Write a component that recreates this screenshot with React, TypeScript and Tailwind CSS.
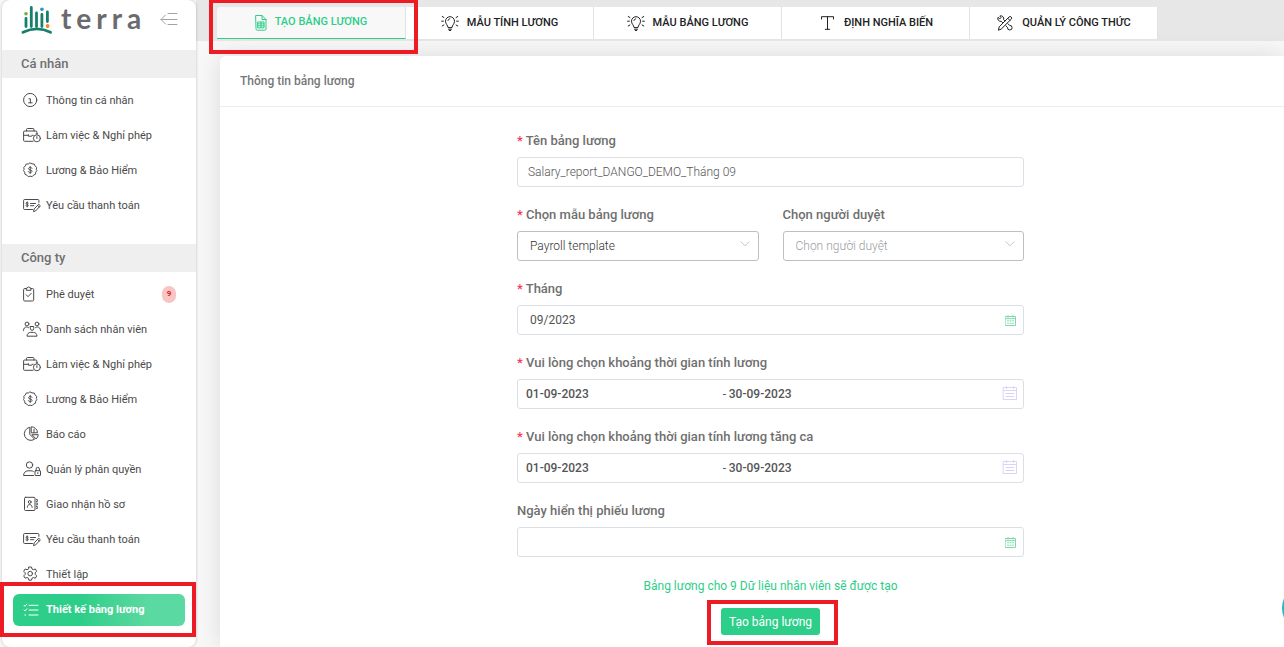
import type { ReactNode } from "react";

function Svg({ w, h, className = "", sw = 1, children }: { w: number; h: number; className?: string; sw?: number; children: ReactNode }) {
  return (
    <svg
      width={w}
      height={h}
      viewBox={`0 0 ${w} ${h}`}
      fill="none"
      stroke="currentColor"
      strokeWidth={sw}
      strokeLinecap="round"
      strokeLinejoin="round"
      className={className}
      aria-hidden="true"
    >
      {children}
    </svg>
  );
}

const InfoIcon = () => (
  <Svg w={18} h={16}>
    <circle cx="7.2" cy="8" r="6.6" />
    <path d="M6 6.8h1.4v4M5.6 10.8h3.6" />
  </Svg>
);

const WorkIcon = () => (
  <Svg w={18} h={16}>
    <path d="M3.5 4V2.6A1.1 1.1 0 0 1 4.6 1.5h5.3A1.1 1.1 0 0 1 11 2.6V4" />
    <path d="M10 14.3H1.6a1 1 0 0 1-1-1V5a1 1 0 0 1 1-1h11.3a1 1 0 0 1 1 1v1.5" />
    <path d="M.6 8.3H5M9 8.3h1.2M5.3 7.6v1.6h3.2" />
    <circle cx="13.9" cy="11.3" r="3.5" />
    <path d="M13.9 9.6v1.9M13.2 6.9h1.5" />
  </Svg>
);

const SalaryIcon = () => (
  <Svg w={18} h={16}>
    <path d="M7.2 1l1.9.9 2.1.1.9 1.9 1.5 1.5-.3 2.1.6 1.1-1.2 1.6-.2 2-1.9.9-1.4 1.5-2-.4-2 .4-1.4-1.5-1.9-.9-.2-2L.5 8.6l.6-1.1-.3-2.1 1.5-1.5L3.2 2l2.1-.1z" />
    <path d="M9 6.3C8.7 5.7 8 5.4 7.2 5.4c-1 0-1.7.5-1.7 1.2 0 1.8 3.5.9 3.5 2.7 0 .8-.8 1.3-1.8 1.3-.9 0-1.6-.4-1.9-1M7.2 4.5v7" />
  </Svg>
);

const PaymentIcon = () => (
  <Svg w={18} h={16}>
    <path d="M9.5 12.500H1.600a1 1 0 0 1-1-1v-8a1 1 0 0 1 1-1h13.300a1 1 0 0 1 1 1v1.800" />
    <path d="M5.200 6C4.300 5.200 3 5.500 3 6.300 3 7.500 5.300 7 5.300 8.400 5.300 9.300 3.700 9.500 2.900 8.700M4.200 4.900v5" />
    <path d="M7.500 6.500h5M7.500 8.700h3.300" />
    <path d="M10.600 14.300l.6-2.400 4.500-4.700 1.700 1.600-4.500 4.800zM14.500 8.400l1.700 1.600" />
  </Svg>
);

const ApproveIcon = () => (
  <Svg w={18} h={16}>
    <path d="M3.300 2.500H1.800A1.200 1.200 0 0 0 .6 3.700v10.100A1.200 1.200 0 0 0 1.800 15h7.700a1.200 1.200 0 0 0 1.200-1.200V3.700a1.200 1.200 0 0 0-1.200-1.200H8" />
    <path d="M3.300 3.900V2.200l1-.2a1.400 1.400 0 0 1 2.700 0l1 .2v1.700z" />
    <path d="M3.200 8.800l1.800 1.900 3.300-3.500" />
  </Svg>
);

const StaffIcon = () => (
  <Svg w={18} h={16}>
    <circle cx="4" cy="3" r="1.900" />
    <circle cx="14" cy="3" r="1.900" />
    <path d="M.5 9.500C.5 7.400 1.700 6 3.600 6c.8 0 1.400.2 1.900.6M17.500 9.500c0-2.100-1.200-3.500-3.100-3.500-.8 0-1.400.2-1.900.6" />
    <path d="M7.300 5.500h3.400v2a1.700 1.900 0 0 1-3.400 0z" />
    <path d="M4 14.800c0-2 1.600-3.400 3.600-3.400h2.800c2 0 3.600 1.400 3.600 3.400z" />
  </Svg>
);

const ReportIcon = () => (
  <Svg w={18} h={16}>
    <path d="M6.500 1.300A6.600 6.600 0 1 0 11.600 13.200L7 8.500z" />
    <path d="M8.600.8a6 6 0 0 1 5.900 6H8.600zM11 3.300v3.400" />
    <path d="M9.300 8.700h6a6 6 0 0 1-1.900 4z" />
  </Svg>
);

const RoleIcon = () => (
  <Svg w={18} h={16}>
    <circle cx="6.500" cy="4" r="3.200" />
    <path d="M10.500 14.500H.6C.6 11.700 2.500 9.800 5 9.800h3c.9 0 1.700.2 2.300.6" />
    <rect x="12" y="9.700" width="5.500" height="4.800" rx=".4" />
    <path d="M13.100 9.700V8a1.600 1.600 0 0 1 3.300 0v1.700M14.800 11.600v1" />
  </Svg>
);

const RecordsIcon = () => (
  <Svg w={18} h={16}>
    <rect x="1.500" y="1.300" width="10.500" height="13.200" rx="1" />
    <path d="M13.500 3.500h.8v2h-.8M13.500 7h.8v2h-.8M13.500 10.500h.8v2h-.8" />
    <circle cx="6.700" cy="6" r="1.400" />
    <path d="M4.300 11.300c0-1.700.9-2.700 2.400-2.700s2.400 1 2.400 2.700" />
  </Svg>
);

const GearIcon = () => (
  <Svg w={18} h={16}>
    <path d="M5.900 1h2.600l.5 2 1.300.7 2-.7 1.400 2.300-1.500 1.500v1.600l1.500 1.500-1.400 2.300-2-.7-1.300.7-.5 2H5.900l-.5-2-1.300-.7-2 .7L.7 9.900l1.500-1.500V6.800L.7 5.300 2.100 3l2 .7L5.400 3z" />
    <circle cx="7.200" cy="7.600" r="2.300" />
  </Svg>
);

const ChecklistIcon = () => (
  <Svg w={18} h={16}>
    <path d="M1 3.300l1 1 1.900-2.300M1 8l1 1 1.900-2.300M1.800 13h.9M6 3.300h9M6 8h9M6 13h9" />
  </Svg>
);

const SheetIcon = () => (
  <Svg w={18} h={18}>
    <path d="M4 1.500h6l4 4V15a1.200 1.200 0 0 1-1.200 1.200H5.200A1.200 1.200 0 0 1 4 15z" />
    <path d="M10 1.500v4h4M6 8h6v5.800H6zM6 9.900h6M6 11.800h6M9 8v5.800" />
  </Svg>
);

const BulbIcon = () => (
  <Svg w={18} h={18}>
    <path d="M7 13.200c0-2-2.500-3-2.500-6a4.500 4.500 0 0 1 9 0c0 3-2.500 4-2.500 6zM7.500 15.200h3M8.300 16.500h1.400M7 6.500c.2-.9.800-1.500 1.700-1.700" />
    <path d="M.6 7.200h1.800M15.600 7.200h1.800M1.200 2.500l1.700 1M16.800 2.500l-1.700 1M1.200 12l1.700-1M16.800 12l-1.700-1" />
  </Svg>
);

const TextIcon = () => (
  <Svg w={18} h={18}>
    <path d="M3.500 5V2.700h12V5M9.500 2.700v12.600M7.300 15.300h4.400" />
  </Svg>
);

const ToolsIcon = () => (
  <Svg w={18} h={18}>
    <path d="M2.500 15.800l.7-3L13 3a1.500 1.500 0 0 1 2.200 2.200l-9.800 9.700zM11.800 4.300l2.100 2.100" />
    <path d="M6.600 8.700L5.300 7.300a2.900 2.900 0 0 1-3.300-4l1.800 1.600 1.300-1.300L3.800 2a2.900 2.900 0 0 1 3.800 3.700l1.200 1.200" />
    <path d="M9.800 11.700l1.700 1.700a2.300 2.300 0 1 0 2-2l-1.600-1.700" />
  </Svg>
);

const CalendarIcon = () => (
  <Svg w={11} h={11} className="text-[#7fd9a9]">
    <path d="M.5 1.500h10v9H.5zM.5 3.700h10M3 .5v1.800M8 .5v1.800" />
    <path d="M2.500 5.800h1M5 5.800h1M7.500 5.800h1M2.500 8.200h1M5 8.200h1M7.500 8.200h1" />
  </Svg>
);

const RangeCalendarIcon = () => (
  <Svg w={16} h={16} className="text-[#dcd2fa]">
    <path d="M1.500 1.500h13v12h-13zM1.500 4.500h13M4.500 .5v2M11.500 .5v2M4 7.500h8M4 10.500h8" />
  </Svg>
);

const Chevron = () => (
  <Svg w={10} h={6} className="pointer-events-none absolute right-[9px] top-[10px] text-[#c0c4cc]">
    <path d="M1 .8l4 4 4-4" />
  </Svg>
);

const Logo = () => (
  <svg width="32" height="30" viewBox="0 0 32 30" fill="none" strokeLinecap="round" aria-hidden="true">
    <g stroke="#17806d" strokeWidth="2.800">
      <path d="M5 13.500v8M10.300 2.500v19M15.500 8v13.500M20.900 9.500v12M26.400 7v9.500" />
    </g>
    <path d="M2 27.300Q16 20.500 29.500 27.300" stroke="#17806d" strokeWidth="2.900" />
    <circle cx="5" cy="8.800" r="1.800" fill="#6fae3f" />
    <circle cx="20.900" cy="4.200" r="1.800" fill="#2196d6" />
    <circle cx="26.600" cy="21" r="1.900" fill="#f08a24" />
  </svg>
);

type NavItem = { icon: () => ReactNode; label: string; count?: number };

const personal: NavItem[] = [
  { icon: InfoIcon, label: "Thông tin cá nhân" },
  { icon: WorkIcon, label: "Làm việc & Nghỉ phép" },
  { icon: SalaryIcon, label: "Lương & Bảo Hiểm" },
  { icon: PaymentIcon, label: "Yêu cầu thanh toán" },
];

const company: NavItem[] = [
  { icon: ApproveIcon, label: "Phê duyệt", count: 9 },
  { icon: StaffIcon, label: "Danh sách nhân viên" },
  { icon: WorkIcon, label: "Làm việc & Nghỉ phép" },
  { icon: SalaryIcon, label: "Lương & Bảo Hiểm" },
  { icon: ReportIcon, label: "Báo cáo" },
  { icon: RoleIcon, label: "Quản lý phân quyền" },
  { icon: RecordsIcon, label: "Giao nhận hồ sơ" },
  { icon: PaymentIcon, label: "Yêu cầu thanh toán" },
  { icon: GearIcon, label: "Thiết lập" },
];

const tabs = [
  { icon: SheetIcon, label: "TẠO BẢNG LƯƠNG" },
  { icon: BulbIcon, label: "MẪU TÍNH LƯƠNG" },
  { icon: BulbIcon, label: "MẪU BẢNG LƯƠNG" },
  { icon: TextIcon, label: "ĐỊNH NGHĨA BIẾN" },
  { icon: ToolsIcon, label: "QUẢN LÝ CÔNG THỨC" },
];

function NavList({ items }: { items: NavItem[] }) {
  return (
    <ul className="pt-[5px]">
      {items.map(({ icon: Icon, label, count }) => (
        <li key={label}>
          <a href="#" className="flex h-[35px] items-center gap-[5px] pr-5 pb-px pl-[21px] text-[11px] text-[#4a4a4a]">
            <Icon />
            <span className="grow pt-[2px]">{label}</span>
            {count && (
              <span className="flex h-[17px] w-[14px] items-center justify-center rounded-full bg-[#f8c4c4] text-[8px] font-bold text-[#e02020]">
                {count}
              </span>
            )}
          </a>
        </li>
      ))}
    </ul>
  );
}

function Sidebar() {
  return (
    <aside className="relative z-10 ml-[2px] w-[194px] shrink-0 rounded-lg bg-white shadow-[0_0_3px_rgba(0,0,0,0.25)]">
      <div className="flex h-[50px] items-start pt-[5px] pl-[19px]">
        <Logo />
        <span className="-mt-[3px] pl-2 font-[Lato] text-[28px] leading-8 font-bold tracking-[5px] text-[#6a6b6e]">terra</span>
        <button type="button" aria-label="Thu gọn" className="ml-auto mr-[18px] mt-[7px] shrink-0">
          <Svg w={18} h={14} className="text-[#a3a3a3]">
            <path d="M8 1.500h9M1 7.500h16M8 12.500h9M5.500 3L1 7.500 5.500 12" />
          </Svg>
        </button>
      </div>
      <h2 className="flex h-7 items-center bg-[#efefef] pl-[19px] text-[13px] font-medium text-[#6f6f6f]">Cá nhân</h2>
      <NavList items={personal} />
      <h2 className="mt-[21px] flex h-7 items-center bg-[#efefef] pl-[19px] text-[13px] font-medium text-[#6f6f6f]">Công ty</h2>
      <NavList items={company} />
      <div className="relative mx-[11px] mt-[2px] mb-[21px]">
        <a
          href="#"
          className="flex h-8 items-center gap-[5px] rounded-md bg-linear-to-r from-[#2dce89] from-40% to-[#5bd9a2] to-80% pl-[10px] text-[11px] font-bold text-white"
        >
          <ChecklistIcon />
          Thiết kế bảng lương
        </a>
        <div className="pointer-events-none absolute -top-3 -right-[11px] -bottom-[11px] -left-[13px] border-4 border-[#ed1c24]" />
      </div>
    </aside>
  );
}

function Label({ id, required, children }: { id: string; required?: boolean; children: ReactNode }) {
  return (
    <label htmlFor={id} className="text-[13px] leading-5 font-medium text-[#6f6f6f]">
      {required && <span className="text-[#f5365c]">* </span>}
      {children}
    </label>
  );
}

const box = "flex h-[30px] items-center rounded-[3px] border border-[#dcdfe6] bg-white";

function RangeField({ id, label }: { id: string; label: string }) {
  return (
    <div className="flex flex-col gap-[6px]">
      <Label id={id} required>
        {label}
      </Label>
      <div className={`${box} pl-[8px] pr-[5px] text-[12px] font-medium text-[#555]`}>
        <input id={id} defaultValue="01-09-2023" className="w-[40%] min-w-0 outline-none" />
        <span className="w-[6px] shrink-0 font-normal">-</span>
        <input aria-label={`${label} - kết thúc`} defaultValue="30-09-2023" className="min-w-0 grow outline-none" />
        <RangeCalendarIcon />
      </div>
    </div>
  );
}

function PayrollForm() {
  return (
    <form className="flex flex-col pt-6 pb-3">
      <div className="flex flex-col gap-[18px]">
        <div className="flex flex-col gap-[6px]">
          <Label id="name" required>
            Tên bảng lương
          </Label>
          <div className={`${box} px-[10px]`}>
            <input id="name" defaultValue="Salary_report_DANGO_DEMO_Tháng 09" className="min-w-0 grow text-[12px] font-light text-[#555] outline-none" />
          </div>
        </div>
        <div className="grid grid-cols-2 gap-6">
          <div className="flex flex-col gap-[6px]">
            <Label id="template" required>
              Chọn mẫu bảng lương
            </Label>
            <div className="relative">
              <select id="template" className="h-[30px] w-full appearance-none rounded-[3px] border border-[#bfbfbf] bg-white px-3 text-[12px] font-light text-[#333]">
                <option>Payroll template</option>
              </select>
              <Chevron />
            </div>
          </div>
          <div className="flex flex-col gap-[6px]">
            <Label id="approver">Chọn người duyệt</Label>
            <div className="relative">
              <select id="approver" className="h-[30px] w-full appearance-none rounded-[3px] border border-[#bfbfbf] bg-white px-3 text-[12px] font-light text-[#999ca3]">
                <option>Chọn người duyệt</option>
              </select>
              <Chevron />
            </div>
          </div>
        </div>
        <div className="flex flex-col gap-[6px]">
          <Label id="month" required>
            Tháng
          </Label>
          <div className={`${box} pl-3 pr-[7px]`}>
            <input id="month" defaultValue="09/2023" className="min-w-0 grow text-[12px] text-[#555] outline-none" />
            <CalendarIcon />
          </div>
        </div>
        <RangeField id="period" label="Vui lòng chọn khoảng thời gian tính lương" />
        <RangeField id="overtime" label="Vui lòng chọn khoảng thời gian tính lương tăng ca" />
        <div className="flex flex-col gap-[6px]">
          <Label id="payslip">Ngày hiển thị phiếu lương</Label>
          <div className={`${box} pl-3 pr-[7px]`}>
            <input id="payslip" className="min-w-0 grow text-[12px] outline-none" />
            <CalendarIcon />
          </div>
        </div>
      </div>
      <p className="mt-[19px] text-center text-[12px] leading-5 text-[#2dce89]">Bảng lương cho 9 Dữ liệu nhân viên sẽ được tạo</p>
      <div className="relative mt-3 self-center">
        <button type="button" className="block h-[27px] rounded-[3px] bg-[#2dce89] px-2 text-[12px] text-white">
          Tạo bảng lương
        </button>
        <div className="pointer-events-none absolute -top-2 -right-[18px] -bottom-[10px] -left-[14px] border-4 border-[#ed1c24]" />
      </div>
    </form>
  );
}

export default function App() {
  return (
    <div className="relative flex min-h-screen overflow-hidden bg-[#f8f8f8] font-[Roboto,'Noto_Sans',sans-serif]">
      <Sidebar />
      <div className="flex min-w-0 grow flex-col">
        <nav className="h-[41px] bg-[#e7e7e7] pt-[7px] pl-[21px]">
          <div className="relative flex h-8 w-max">
            {tabs.map(({ icon: Icon, label }, i) => (
              <a
                key={label}
                href="#"
                className={
                  i === 0
                    ? "flex w-[189px] items-center justify-center gap-[5px] rounded-tl border-r border-b border-r-[#e0e2ea] border-b-[#2dce89] bg-[#f8f8f8] pr-[3px] text-[11px] font-medium text-[#2dce89]"
                    : "flex w-[188px] items-center justify-center gap-2 border-r border-[#e0e2ea] bg-white text-[11px] font-medium text-[#222] last:rounded-tr last:border-r-0"
                }
              >
                <Icon />
                {label}
              </a>
            ))}
            <div className="pointer-events-none absolute -top-[8px] -bottom-[15px] -left-[8px] w-[209px] border-4 border-[#ed1c24]" />
          </div>
        </nav>
        <main className="mt-[15px] ml-6 grow rounded-tl-md bg-white shadow-[0_0_26px_rgba(0,0,0,0.12)]">
          <h1 className="flex h-[51px] items-center border-b border-[#ededf0] pl-5 text-[12px] font-medium text-[#777]">Thông tin bảng lương</h1>
          <div className="grid grid-cols-[297fr_507fr_260fr]">
            <div className="col-start-2">
              <PayrollForm />
            </div>
          </div>
        </main>
      </div>
      <button type="button" aria-label="Trợ giúp" className="absolute top-[584px] -right-[46px] size-12 rounded-full bg-[#2ab4c6]" />
    </div>
  );
}
